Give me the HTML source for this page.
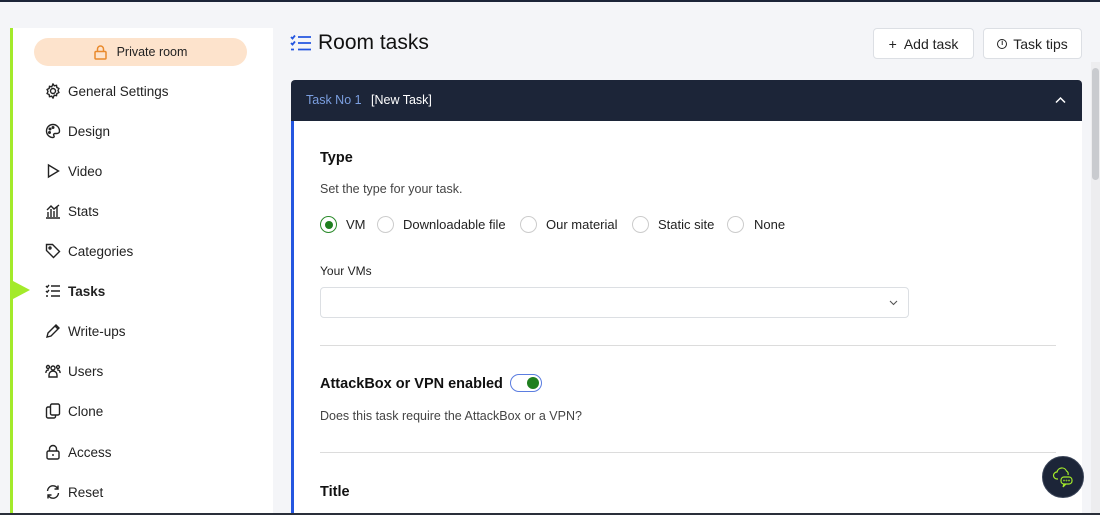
<!DOCTYPE html>
<html><head><meta charset="utf-8"><style>
*{box-sizing:border-box;margin:0;padding:0}
body{width:1100px;height:515px;overflow:hidden;background:#f4f5f8;font-family:"Liberation Sans",sans-serif;color:#222;position:relative}
.a{position:absolute}
.nav{position:absolute;left:45px;font-size:13.5px;color:#222;display:flex;align-items:center;gap:7px;height:20px}
.nav svg{width:16px;height:16px;fill:none;stroke:#222;stroke-width:1.4}
.btn{position:absolute;top:28px;height:31px;background:#fff;border:1px solid #dcdfe4;border-radius:4px;font-size:14px;display:flex;align-items:center;justify-content:center;color:#222}
.radio{position:absolute;top:216px;width:17px;height:17px;border:1px solid #ccc;border-radius:50%;background:#fff}
.rl{position:absolute;top:217px;font-size:13px;color:#222}
</style></head><body>
<div class="a" style="left:0;top:0;width:1100px;height:2px;background:#1c2538"></div>
<div class="a" style="left:10px;top:28px;width:263px;height:487px;background:#fff;border-left:3px solid #a3ea2a"></div>
<div class="a" style="left:13px;top:281px;width:0;height:0;border-top:9px solid transparent;border-bottom:9px solid transparent;border-left:17px solid #a3ea2a"></div>
<div class="a" style="left:34px;top:38px;width:213px;height:28px;background:#fde3cc;border-radius:14px;font-size:12.5px;display:flex;align-items:center;justify-content:center;gap:10px;color:#222">
<svg width="13" height="15" viewBox="0 0 13 15" fill="none" stroke="#e9892b" stroke-width="1.5"><rect x="1" y="6.5" width="11" height="7.5" rx="1"/><path d="M3.5 6.5V4a3 3 0 0 1 6 0v2.5"/></svg>Private room</div>

<div class="nav" style="top:81px"><svg viewBox="0 0 16 16"><circle cx="8" cy="8" r="2.5"/><path d="M8 1l1.3 1.8 2.2-.5.4 2.2 2 1-.9 2 .9 2-2 1-.4 2.2-2.2-.5L8 15l-1.3-1.8-2.2.5-.4-2.2-2-1 .9-2-.9-2 2-1 .4-2.2 2.2.5z"/></svg>General Settings</div>
<div class="nav" style="top:121px"><svg viewBox="0 0 16 16"><path d="M8 1.5a6.5 6.5 0 0 0 0 13c1.3 0 1.4-1.2.8-2-.6-.9.1-2 1.2-2h2c1.5 0 2.5-1 2.5-2.5C14.5 4.5 11.6 1.5 8 1.5z"/><circle cx="5" cy="6" r=".8"/><circle cx="8" cy="4.5" r=".8"/><circle cx="4.5" cy="9.5" r=".8"/></svg>Design</div>
<div class="nav" style="top:161px"><svg viewBox="0 0 16 16"><path d="M3.5 2v12l10-6z"/></svg>Video</div>
<div class="nav" style="top:201px"><svg viewBox="0 0 16 16"><path d="M1 15h14M3 14V9M6 14V6M9 14V8M12 14V4M2 7l4-4 3 3 5-4"/></svg>Stats</div>
<div class="nav" style="top:241px"><svg viewBox="0 0 16 16"><path d="M1.5 1.5h6l7 7-6 6-7-7z"/><circle cx="5" cy="5" r="1"/></svg>Categories</div>
<div class="nav" style="top:281px;font-weight:bold"><svg viewBox="0 0 16 16"><path d="M1 3l1.2 1.2L4 2M1 8l1.2 1.2L4 7M1 13h2M6 3h9M6 8h9M6 13h9"/></svg>Tasks</div>
<div class="nav" style="top:321px"><svg viewBox="0 0 16 16"><path d="M2 14l1-4 8-8 3 3-8 8z M10 3l3 3"/></svg>Write-ups</div>
<div class="nav" style="top:361px"><svg viewBox="0 0 16 16"><circle cx="8" cy="5" r="2"/><circle cx="3" cy="4" r="1.5"/><circle cx="13" cy="4" r="1.5"/><path d="M4 14v-2a4 4 0 0 1 8 0v2zM1 10a2.5 2.5 0 0 1 3-3M15 10a2.5 2.5 0 0 0-3-3"/></svg>Users</div>
<div class="nav" style="top:401px"><svg viewBox="0 0 16 16"><rect x="5.5" y="1" width="9" height="11" rx="1.5"/><path d="M5.5 4H3a1.5 1.5 0 0 0-1.5 1.5v8A1.5 1.5 0 0 0 3 15h6a1.5 1.5 0 0 0 1.5-1.5V12"/></svg>Clone</div>
<div class="nav" style="top:442px"><svg viewBox="0 0 16 16"><rect x="2" y="7" width="12" height="8" rx="1.5"/><path d="M4.5 7V5a3.5 3.5 0 0 1 7 0v2M8 10v2"/></svg>Access</div>
<div class="nav" style="top:482px"><svg viewBox="0 0 16 16"><path d="M2.5 7A5.5 5.5 0 0 1 13 5M13.5 9A5.5 5.5 0 0 1 3 11M13 1.5V5H9.5M3 14.5V11h3.5"/></svg>Reset</div>

<svg class="a" style="left:290px;top:34px" width="22" height="18" viewBox="0 0 22 18" fill="none" stroke="#2456e0" stroke-width="1.8"><path d="M1 3l1.5 1.5L5 1.5M1 9l1.5 1.5L5 7.5M1 15.5h3M8 3h13M8 9h13M8 15.5h13"/></svg>
<div class="a" style="left:318px;top:31px;font-size:21px;color:#111">Room tasks</div>
<div class="btn" style="left:873px;width:101px">+&nbsp; Add task</div>
<div class="btn" style="left:983px;width:99px"><span style="display:inline-block;width:10px;height:10px;border:1.3px solid #222;border-radius:50%;margin-right:6px;font-size:7px;line-height:8px;text-align:center;font-weight:bold">i</span>Task tips</div>

<div class="a" style="left:1091px;top:62px;width:9px;height:453px;background:#ededef"></div>
<div class="a" style="left:1092px;top:68px;width:7px;height:112px;background:#c9cbcf;border-radius:4px"></div>

<div class="a" style="left:291px;top:80px;width:791px;height:41px;background:#1c2538;border-radius:4px 4px 0 0"></div>
<div class="a" style="left:306px;top:93px;font-size:12.5px;color:#7b9fe0">Task No 1</div>
<div class="a" style="left:371px;top:93px;font-size:12.5px;color:#fff">[New Task]</div>
<svg class="a" style="left:1055px;top:96px" width="11" height="8" viewBox="0 0 11 8" fill="none" stroke="#fff" stroke-width="1.5"><path d="M1 6.5l4.5-4.5 4.5 4.5"/></svg>
<div class="a" style="left:291px;top:121px;width:791px;height:394px;background:#fff;border-left:3px solid #2456e0"></div>

<div class="a" style="left:320px;top:150px;font-size:14.5px;font-weight:bold;color:#111">Type</div>
<div class="a" style="left:320px;top:182px;font-size:12.5px;color:#444">Set the type for your task.</div>
<div class="radio" style="left:320px;border-color:#2a8a2a"><div style="margin:3.5px;width:8px;height:8px;border-radius:50%;background:#1f7f1f"></div></div>
<div class="rl" style="left:346px">VM</div>
<div class="radio" style="left:377px"></div><div class="rl" style="left:403px">Downloadable file</div>
<div class="radio" style="left:520px"></div><div class="rl" style="left:546px">Our material</div>
<div class="radio" style="left:632px"></div><div class="rl" style="left:658px">Static site</div>
<div class="radio" style="left:727px"></div><div class="rl" style="left:754px">None</div>

<div class="a" style="left:320px;top:264px;font-size:12px;color:#222">Your VMs</div>
<div class="a" style="left:320px;top:287px;width:589px;height:31px;border:1px solid #dcdfe3;border-radius:4px"></div>
<svg class="a" style="left:889px;top:300px" width="9" height="6" viewBox="0 0 9 6" fill="none" stroke="#555" stroke-width="1.1"><path d="M1 1l3.5 3.5L8 1"/></svg>
<div class="a" style="left:320px;top:345px;width:736px;height:1px;background:#dcdcdc"></div>

<div class="a" style="left:320px;top:376px;font-size:14.5px;font-weight:bold;color:#111">AttackBox or VPN enabled</div>
<div class="a" style="left:510px;top:374px;width:32px;height:18px;border:1.5px solid #5b7de0;border-radius:9px;background:#fff"><div style="position:absolute;right:2px;top:1.5px;width:12px;height:12px;border-radius:50%;background:#1f7f1f"></div></div>
<div class="a" style="left:320px;top:409px;font-size:12.5px;color:#444">Does this task require the AttackBox or a VPN?</div>
<div class="a" style="left:320px;top:452px;width:736px;height:1px;background:#dcdcdc"></div>
<div class="a" style="left:320px;top:484px;font-size:14.5px;font-weight:bold;color:#111">Title</div>

<div class="a" style="left:1042px;top:456px;width:42px;height:42px;border-radius:50%;background:#1c2538;border:1px solid #3a4458"></div>
<svg class="a" style="left:1052px;top:466px" width="22" height="22" viewBox="0 0 22 22" fill="none" stroke="#a3ea2a" stroke-width="1.2"><path d="M6 13H5a3.5 3.5 0 0 1 0-7 5 5 0 0 1 9.5-1A3.5 3.5 0 0 1 16 9"/><rect x="9" y="11" width="11" height="7" rx="3"/><path d="M12 18l-1 3 3-3"/><circle cx="12" cy="14.5" r=".3"/><circle cx="14.5" cy="14.5" r=".3"/><circle cx="17" cy="14.5" r=".3"/></svg>
<div class="a" style="left:0;top:513px;width:1100px;height:2px;background:#2a2f3a"></div>
</body></html>
